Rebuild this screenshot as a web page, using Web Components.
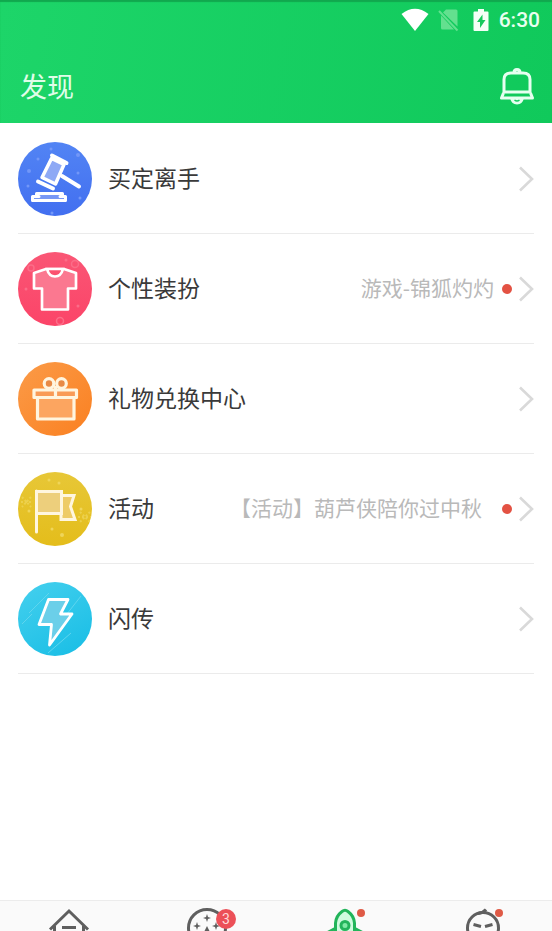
<!DOCTYPE html>
<html lang="zh-CN">
<head>
<meta charset="utf-8">
<meta name="viewport" content="width=device-width, initial-scale=1">
<title>发现</title>
<style>
body { margin: 0; background: #fff; font-family: "Noto Sans CJK SC", sans-serif; color: #3a3a3a; }
</style>
</head>
<body>
<discover-page></discover-page>
<script>
const define = (name, html) => customElements.define(name, class extends HTMLElement {
  constructor() {
    super();
    const t = document.createElement('template');
    t.innerHTML = html;
    this.attachShadow({ mode: 'open' }).append(t.content.cloneNode(true));
  }
});

define('status-bar', `
<style>
:host { display: flex; justify-content: flex-end; align-items: center; height: 40px; padding-right: 12px; color: #e9fff0; font: 500 21px/40px Roboto, sans-serif; }
svg { display: block; flex: none; }
.sim { margin-left: 9px; }
.bat { margin-left: 13px; }
time { margin-left: 10px; }
</style>
<svg width="28" height="24" viewBox="0 0 28 24"><path fill="#fff" d="M0.5 6Q14-4.500 27.500 6L14 23Z"/></svg>
<svg class="sim" width="22" height="24" viewBox="0 0 22 24"><path fill="#63e08f" d="M8 1.500h10q1.500 0 1.500 1.500v15.500L5 4.500zM3 7.500L16 21.500H4.500Q3 21.500 3 20z"/><path stroke="#63e08f" stroke-width="2" d="M1 3l18.500 19.500"/></svg>
<svg class="bat" width="16" height="24" viewBox="0 0 16 24"><path fill="#f4fff7" d="M5 1h6v2.500h3.500q1 0 1 1v17.500q0 1-1 1h-13q-1 0-1-1v-17.500q0-1 1-1H5z"/><path fill="#16c95d" d="M9.500 6.500L4 14h3v6l5.500-8h-3z"/></svg>
<time>6:30</time>
`);

define('app-header', `
<style>
:host { display: block; background: linear-gradient(100deg, #1dd569, #10c95b); box-shadow: inset 0 2px 1px #11a84e; }
.bar { display: flex; align-items: center; justify-content: space-between; height: 83px; padding: 8px 17px 0 20px; box-sizing: border-box; }
h1 { margin: 0; font-size: 27px; line-height: 40px; font-weight: 400; color: #e0fde9; }
button { all: unset; display: block; cursor: pointer; }
svg { display: block; }
</style>
<status-bar></status-bar>
<div class="bar">
  <h1><slot></slot></h1>
  <button aria-label="通知">
    <svg width="36" height="38" viewBox="0 0 36 38" fill="none" stroke="#e6fff0" stroke-width="3" stroke-linejoin="round">
      <path d="M5 26V12.500Q5 6 12 6H24Q31 6 31 12.500V26M5.500 25H30.500M4.500 26L2.500 31H33.500L31.500 26M15 5.500Q15 2.500 18 2.500T21 5.500"/>
      <path fill="#e6fff0" stroke="none" d="M11 31h14q-1.500 6.500-7 6.500t-7-6.500z"/>
      <path stroke="#14cc5f" stroke-width="1.500" d="M15.500 33q2.500 2 5 0"/>
    </svg>
  </button>
</div>
`);

define('menu-row', `
<style>
:host { display: block; margin: 0 18px; border-bottom: 1px solid #ebebeb; }
a { display: flex; align-items: center; height: 109px; color: inherit; text-decoration: none; }
.icon { flex: none; width: 74px; height: 74px; }
.label, .note { padding-bottom: 3px; line-height: 34px; white-space: nowrap; }
.label { margin-left: 16px; font-size: 23px; }
.note { flex: 1; margin: 0 8px; text-align: right; font-size: 21px; color: #b9b9b9; }
.dot { display: none; flex: none; width: 10px; height: 10px; margin-right: 6px; border-radius: 50%; background: #e35243; }
:host([dot]) .dot { display: block; }
:host([spaced]) .note { margin-right: 20px; }
.chev { flex: none; display: block; }
</style>
<a href="#">
  <span class="icon"><slot name="icon"></slot></span>
  <span class="label"><slot></slot></span>
  <span class="note"><slot name="note"></slot></span>
  <span class="dot"></span>
  <svg class="chev" width="16" height="28" viewBox="0 0 16 28" fill="none" stroke="#d9d9d9" stroke-width="2.600"><path d="M2 2.500L14 14L2 25.500"/></svg>
</a>
`);

const disc = (name, bg, body) => define(name, `
<style>:host, svg { display: block; width: 74px; height: 74px; } :host { border-radius: 50%; overflow: hidden; background: ${bg}; }</style>
<svg viewBox="0 0 74 74" fill="none" aria-hidden="true">${body}</svg>`);

disc('icon-gavel', 'linear-gradient(#5284f4, #426ff0)', `
<g fill="#7297f8"><circle cx="60" cy="13" r="2"/><circle cx="33" cy="7" r="1.500"/><circle cx="11" cy="29" r="2"/><circle cx="10" cy="44" r="1.500"/><circle cx="62" cy="56" r="1.500"/><circle cx="34" cy="71" r="1.500"/><circle cx="60" cy="31" r="1.500"/><circle cx="20" cy="17" r="1.500"/></g>
<g stroke="#fff" stroke-linecap="round" stroke-linejoin="round">
<path fill="#8ea9f5" stroke-width="3.500" d="M33.500 16.500L46 22.500L37.500 42L24 35.500Z"/>
<path stroke-width="4" d="M34 13.500L48.500 21M20 39.500L35 46.500M44 34L61 44.500"/>
<path fill="#7898f5" stroke-width="3" d="M18.500 51.500H44.500V54.500H47.500V58.500H14.500V54.500H18.500Z"/><path stroke-width="3" d="M16 58.500H46M19 54.500H21M42 54.500H45"/>
</g>`);
disc('icon-shirt', 'linear-gradient(#fa5675, #fb4468)', `
<g stroke="#fb6d88" stroke-width="1.500"><circle cx="57" cy="12" r="3.500"/><circle cx="13" cy="16" r="3"/><circle cx="42" cy="69" r="3.500"/></g><g fill="#fb6d88"><circle cx="48" cy="8" r="1.500"/><circle cx="60" cy="54" r="1.500"/><circle cx="8" cy="37" r="1.500"/></g>
<path fill="#fb7890" stroke="#fff" stroke-width="2.700" stroke-linejoin="round" d="M28 17L16 21V36.500H24V57.500H50V36.500H58V21L46 17Z"/><path fill="#fb5270" stroke="#fff" stroke-width="2.700" d="M29 17Q31 24.500 37 24.500T45 17Z"/>`);
disc('icon-gift', 'linear-gradient(135deg, #fb9b48, #fa8021)', `
<g stroke="#fff5df" stroke-width="3.200" stroke-linejoin="round"><rect x="19.500" y="35" width="36.500" height="22" fill="#fca560"/><rect x="16" y="28" width="42.500" height="7.500" fill="#f99b56"/><circle cx="31" cy="21.500" r="4.800" fill="#e88a45"/><circle cx="43.500" cy="21.500" r="4.800" fill="#e88a45"/><path d="M37.500 24V35"/></g>`);
disc('icon-flag', 'linear-gradient(#e7c737, #e4bd1b)', `
<g fill="#efd55a"><circle cx="31" cy="8" r="1.500"/><circle cx="41" cy="11" r="1.500"/><circle cx="11" cy="39" r="1.500"/><circle cx="34" cy="57" r="1.500"/><circle cx="44" cy="63" r="2"/><circle cx="63" cy="37" r="1.500"/></g>
<path stroke="#ecd04c" stroke-width="2" stroke-dasharray="2 2" d="M4 25l9 10M13 25L4 35M3 30h11M62 40l10 10M72 40L62 50M60 45h13"/>
<g stroke="#fff6df" stroke-width="3"><path fill="#eecb67" d="M43 23.500H56L52.500 34.500L57 47.500H43Z"/><path fill="#edcf7c" d="M18.500 19.500H43.500V41.500H18.500Z"/><path stroke-linecap="round" d="M18.500 19V60"/></g>`);
disc('icon-bolt', 'linear-gradient(150deg, #45d0ee, #17bde5)', `
<path stroke="#5fd5ee" stroke-width="1" d="M11 31L31 11M45 37L63 14M30 71L53 51M4 42L14 32"/>
<path fill="#6bcfe9" stroke="#fff" stroke-width="2.800" stroke-linejoin="round" d="M30.500 17.500H50L42.500 32H54L31.500 63L33.500 42.500H21Z"/>`);

define('tab-item', `
<style>
:host { display: block; flex: 1; }
button { all: unset; display: flex; justify-content: center; width: 100%; cursor: pointer; }
.box { position: relative; width: 44px; height: 44px; }
.dot { display: none; position: absolute; top: 1px; right: 2px; width: 8px; height: 8px; border-radius: 50%; background: #df5a46; }
:host([dot]) .dot { display: block; }
::slotted(.badge) { position: absolute; top: 1px; right: -7px; width: 20px; height: 20px; border-radius: 50%; background: #ec5058; color: #ffdada; font: 14px/20px Roboto, sans-serif; text-align: center; }
</style>
<button><span class="box"><slot></slot><slot name="badge"></slot><span class="dot"></span></span></button>
`);

const glyph = (name, body) => define(name, `<style>:host, svg { display: block; }</style>
<svg width="44" height="44" viewBox="0 0 44 44" fill="none" stroke="#5f5f5f" stroke-width="3" aria-hidden="true">${body}</svg>`);
glyph('glyph-home', `<path d="M3 21.500L22 3L41 21.500M7.500 18V38H36.500V18M15 19.500H29"/>`);
glyph('glyph-world', `<circle cx="22" cy="20" r="18.500"/><path fill="#5f5f5f" stroke="none" d="M22 6l1 3 3 1-3 1-1 3-1-3-3-1 3-1zM12 14l1 3 3 1-3 1-1 3-1-3-3-1 3-1zM31 14l1 3 3 1-3 1-1 3-1-3-3-1 3-1zM22 18l4 8h-8z"/>`);
glyph('glyph-rocket', `<g stroke="#22b45a"><path fill="#b6f4cd" d="M13 20L5.500 24Q4 25 4 27V31L13 27M31 20L38.500 24Q40 25 40 27V31L31 27"/><path fill="#cffbdf" d="M12.500 35V15Q13 8 19 3.500Q22 1 25 3.500Q31 8 31.500 15V35Z"/><circle cx="22" cy="17.500" r="4" fill="#7eeaa4"/></g>`);
glyph('glyph-me', `<circle cx="22" cy="20" r="15.500"/><path d="M17 5.500Q22 5 25 1.500M12.500 16.500L20 18.500M31.500 16.500L24 18.500"/>`);

define('tab-bar', `
<style>
:host { display: block; flex: none; height: 30px; overflow: hidden; border-top: 1px solid #ececec; background: #fafafa; }
nav { display: flex; padding-top: 7px; }
</style>
<nav><slot></slot></nav>
`);

define('discover-page', `
<style>
:host { display: flex; flex-direction: column; height: 100vh; }
main { flex: 1; min-height: 0; padding-top: 1px; }
app-header, tab-bar { flex: none; }
</style>
<app-header>发现</app-header>
<main>
  <menu-row><icon-gavel slot="icon"></icon-gavel>买定离手</menu-row>
  <menu-row dot><icon-shirt slot="icon"></icon-shirt>个性装扮<span slot="note">游戏-锦狐灼灼</span></menu-row>
  <menu-row><icon-gift slot="icon"></icon-gift>礼物兑换中心</menu-row>
  <menu-row dot spaced><icon-flag slot="icon"></icon-flag>活动<span slot="note">【活动】葫芦侠陪你过中秋</span></menu-row>
  <menu-row><icon-bolt slot="icon"></icon-bolt>闪传</menu-row>
</main>
<tab-bar>
  <tab-item><glyph-home></glyph-home></tab-item>
  <tab-item><glyph-world></glyph-world><span class="badge" slot="badge">3</span></tab-item>
  <tab-item dot><glyph-rocket></glyph-rocket></tab-item>
  <tab-item dot><glyph-me></glyph-me></tab-item>
</tab-bar>
`);
</script>
</body>
</html>
